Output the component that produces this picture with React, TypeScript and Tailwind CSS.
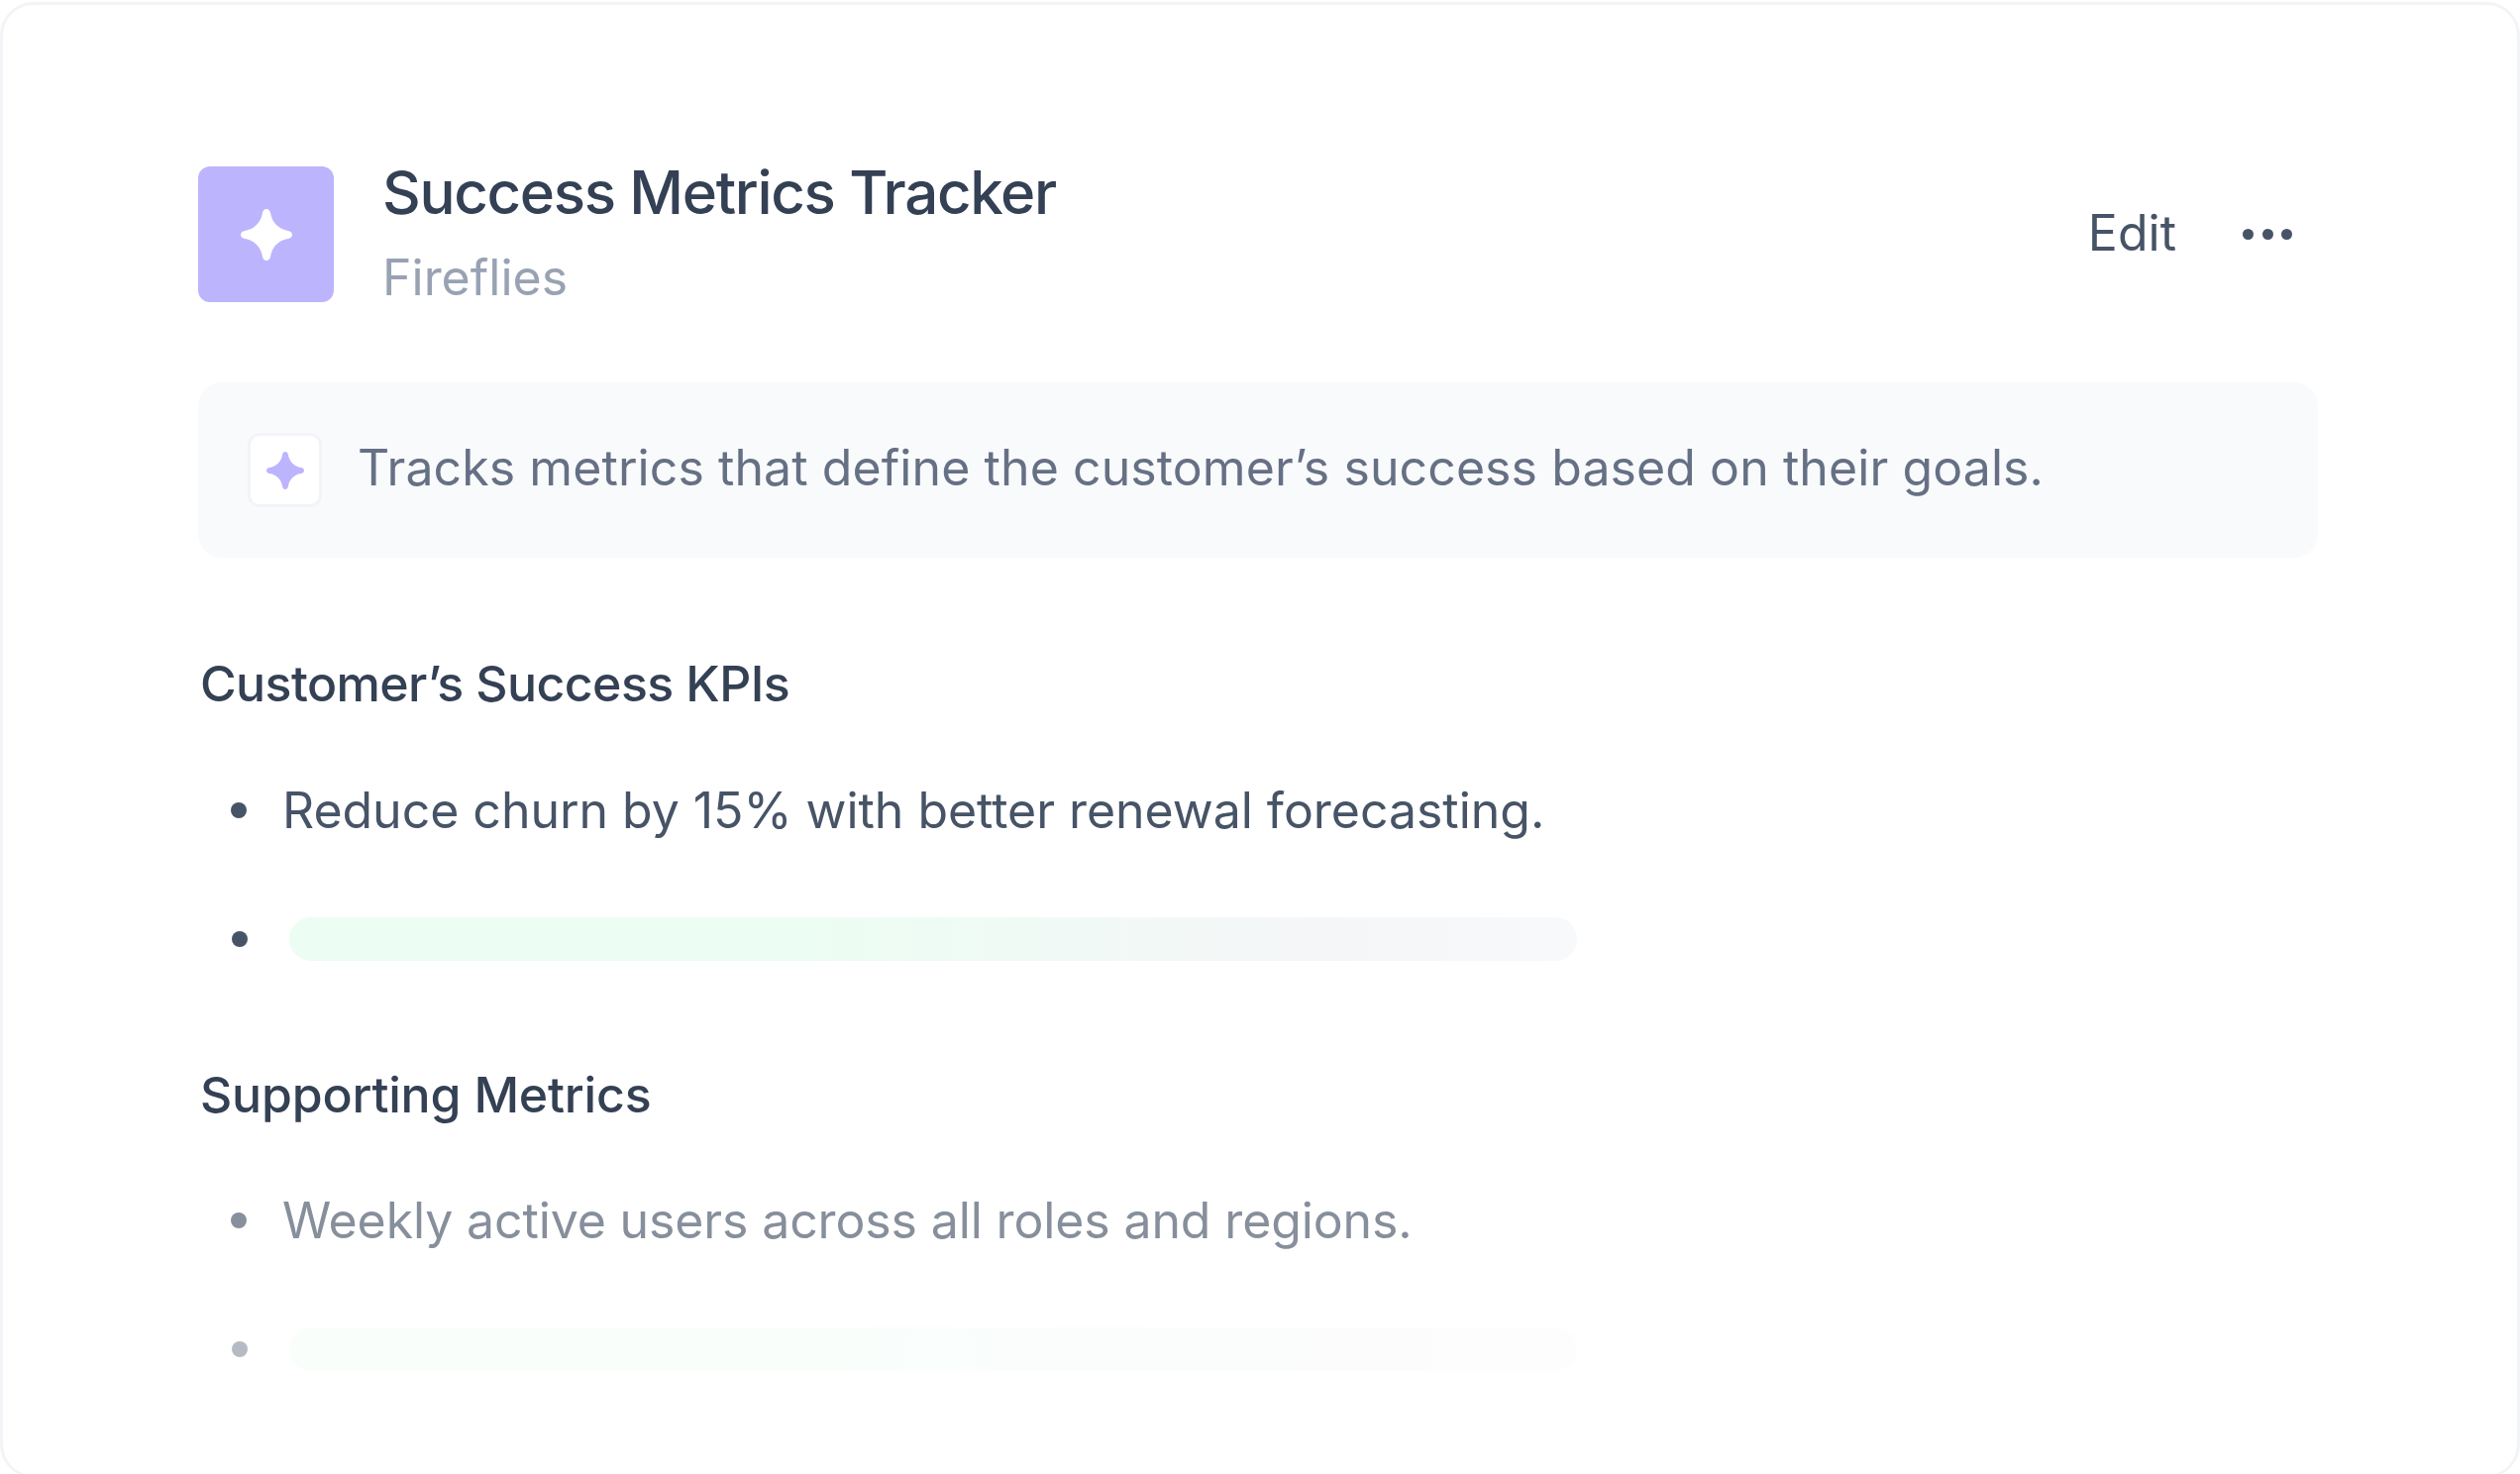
const STAR =
  "M12 0c1.1 0 1.7.9 1.9 2 .7 4.3 3.8 7.4 8.1 8.1 1.1.2 2 .8 2 1.9s-.9 1.7-2 1.9c-4.3.7-7.4 3.8-8.1 8.1-.2 1.1-.8 2-1.9 2s-1.7-.9-1.9-2c-.7-4.3-3.8-7.4-8.1-8.1-1.1-.2-2-.8-2-1.9s.9-1.7 2-1.9c4.3-.7 7.4-3.8 8.1-8.1.2-1.1.8-2 1.9-2z"

function Sparkle({ className }: { className: string }) {
  return (
    <svg viewBox="0 0 24 24" className={className} aria-hidden="true">
      <path d={STAR} fill="currentColor" />
    </svg>
  )
}

function TextRow({ text, faded }: { text: string; faded?: boolean }) {
  return (
    <li className={`flex h-[72px] items-center ${faded ? "opacity-[0.65]" : ""}`}>
      <span className="ml-[33px] size-[16px] shrink-0 rounded-full bg-[#475467]" />
      <span
        className={`ml-[36px] text-[50px] leading-[72px] text-[#475467] ${
          faded ? "tracking-[-0.13px]" : "tracking-[-0.03px]"
        }`}
      >
        {text}
      </span>
    </li>
  )
}

function BarRow({ faded }: { faded?: boolean }) {
  return (
    <li className="mt-[72px] flex h-[44px] items-center">
      <span
        className={`ml-[34px] size-[16px] shrink-0 rounded-full bg-[#475467] ${faded ? "opacity-[0.4]" : ""}`}
      />
      <span
        className={`ml-[42px] h-[44px] w-[1300px] rounded-full bg-gradient-to-r from-[#ecfdf3] from-40% via-[#f5f6f8] via-80% to-[#f8f9fb] ${
          faded ? "opacity-[0.3]" : ""
        }`}
      />
    </li>
  )
}

export default function App() {
  return (
    <main className="h-[1488px] w-[2544px] overflow-hidden bg-white font-['Inter',sans-serif]">
      <div className="mt-[2px] h-[1490px] rounded-[34px] border-[3px] border-[#f2f4f7] pt-[163px] pr-[201px] pl-[197px]">
        <header className="flex h-[137px] items-center">
          <div className="flex size-[137px] shrink-0 items-center justify-center rounded-[12px] bg-[#bdb4fe]">
            <Sparkle className="size-[52px] text-white" />
          </div>
          <div className="ml-[49px] flex flex-col pb-[6px]">
            <h1 className="text-[60px] leading-[72px] font-medium tracking-[-1.33px] text-[#344054]">
              Success Metrics Tracker
            </h1>
            <p className="mt-[20px] text-[50px] leading-[60px] text-[#98a2b3]">Fireflies</p>
          </div>
          <button className="mr-[67px] mb-[3px] ml-auto text-[50px] leading-[60px] text-[#475467]">
            Edit
          </button>
          <div className="mr-[26px] flex gap-[8.5px]">
            <span className="size-[11px] rounded-full bg-[#475467]" />
            <span className="size-[11px] rounded-full bg-[#475467]" />
            <span className="size-[11px] rounded-full bg-[#475467]" />
          </div>
        </header>

        <section className="mt-[81px] flex h-[177px] items-center rounded-[24px] bg-[#f9fafb] pl-[50px]">
          <div className="flex size-[75px] shrink-0 items-center justify-center rounded-[12px] border-[3px] border-[#f2f4f7] bg-white">
            <Sparkle className="size-[38px] text-[#bdb4fe]" />
          </div>
          <p className="mb-[6px] ml-[36px] text-[50px] leading-[72px] tracking-[0.08px] text-[#667085]">
            Tracks metrics that define the customer’s success based on their goals.
          </p>
        </section>

        <h2 className="mt-[91px] pl-[2px] text-[50px] leading-[72px] font-medium tracking-[-0.58px] text-[#344054]">
          Customer’s Success KPIs
        </h2>
        <ul className="mt-[56px]">
          <TextRow text="Reduce churn by 15% with better renewal forecasting." />
          <BarRow />
        </ul>

        <h2 className="mt-[99px] pl-[2px] text-[50px] leading-[72px] font-medium tracking-[-0.2px] text-[#344054]">
          Supporting Metrics
        </h2>
        <ul className="mt-[55px]">
          <TextRow text="Weekly active users across all roles and regions." faded />
          <BarRow faded />
        </ul>
      </div>
    </main>
  )
}
